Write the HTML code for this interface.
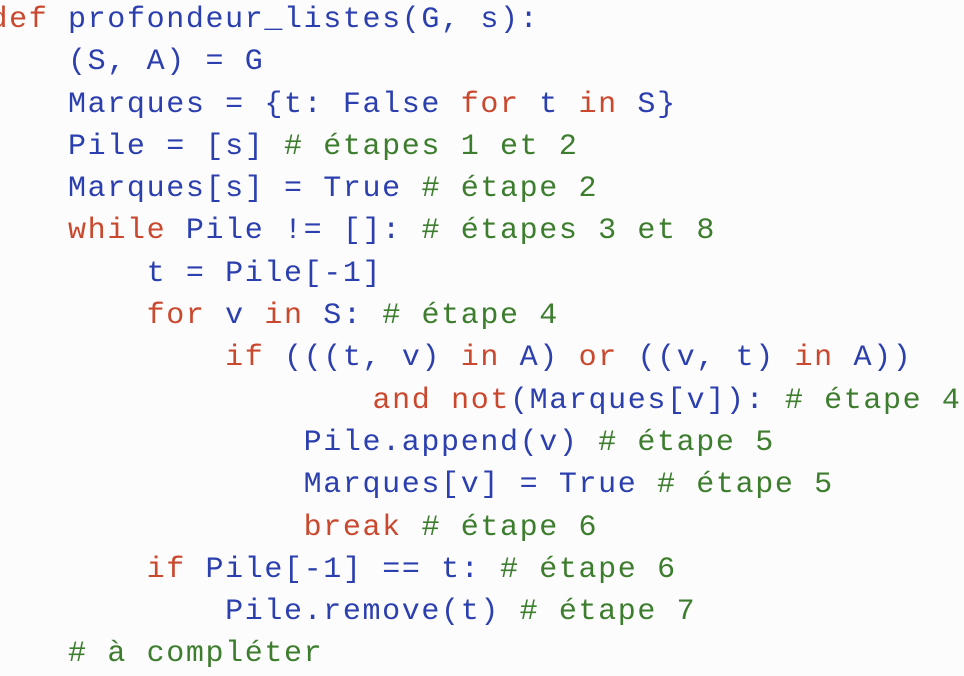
<!DOCTYPE html>
<html><head><meta charset="utf-8"><style>
html,body{margin:0;padding:0;background:#fcfcfc;width:964px;height:664px;overflow:hidden}
pre{position:absolute;left:-10.5px;top:-1px;margin:0;font-family:"Liberation Mono",monospace;font-size:30px;letter-spacing:1.63px;line-height:42.3px;color:#2b3fae}
.k{color:#c9482e}.c{color:#3d7d2e}
</style></head><body><pre><span class="k">def</span> profondeur_listes(G, s):
    (S, A) = G
    Marques = {t: False <span class="k">for</span> t <span class="k">in</span> S}
    Pile = [s] <span class="c"># étapes 1 et 2</span>
    Marques[s] = True <span class="c"># étape 2</span>
    <span class="k">while</span> Pile != []: <span class="c"># étapes 3 et 8</span>
        t = Pile[-1]
        <span class="k">for</span> v <span class="k">in</span> S: <span class="c"># étape 4</span>
            <span class="k">if</span> (((t, v) <span class="k">in</span> A) <span class="k">or</span> ((v, t) <span class="k">in</span> A))
                   <span style="padding-left:10px"></span><span class="k">and</span> <span class="k">not</span>(Marques[v]): <span class="c"># étape 4</span>
                Pile.append(v) <span class="c"># étape 5</span>
                Marques[v] = True <span class="c"># étape 5</span>
                <span class="k">break</span> <span class="c"># étape 6</span>
        <span class="k">if</span> Pile[-1] == t: <span class="c"># étape 6</span>
            Pile.remove(t) <span class="c"># étape 7</span>
    <span class="c"># à compléter</span></pre></body></html>
